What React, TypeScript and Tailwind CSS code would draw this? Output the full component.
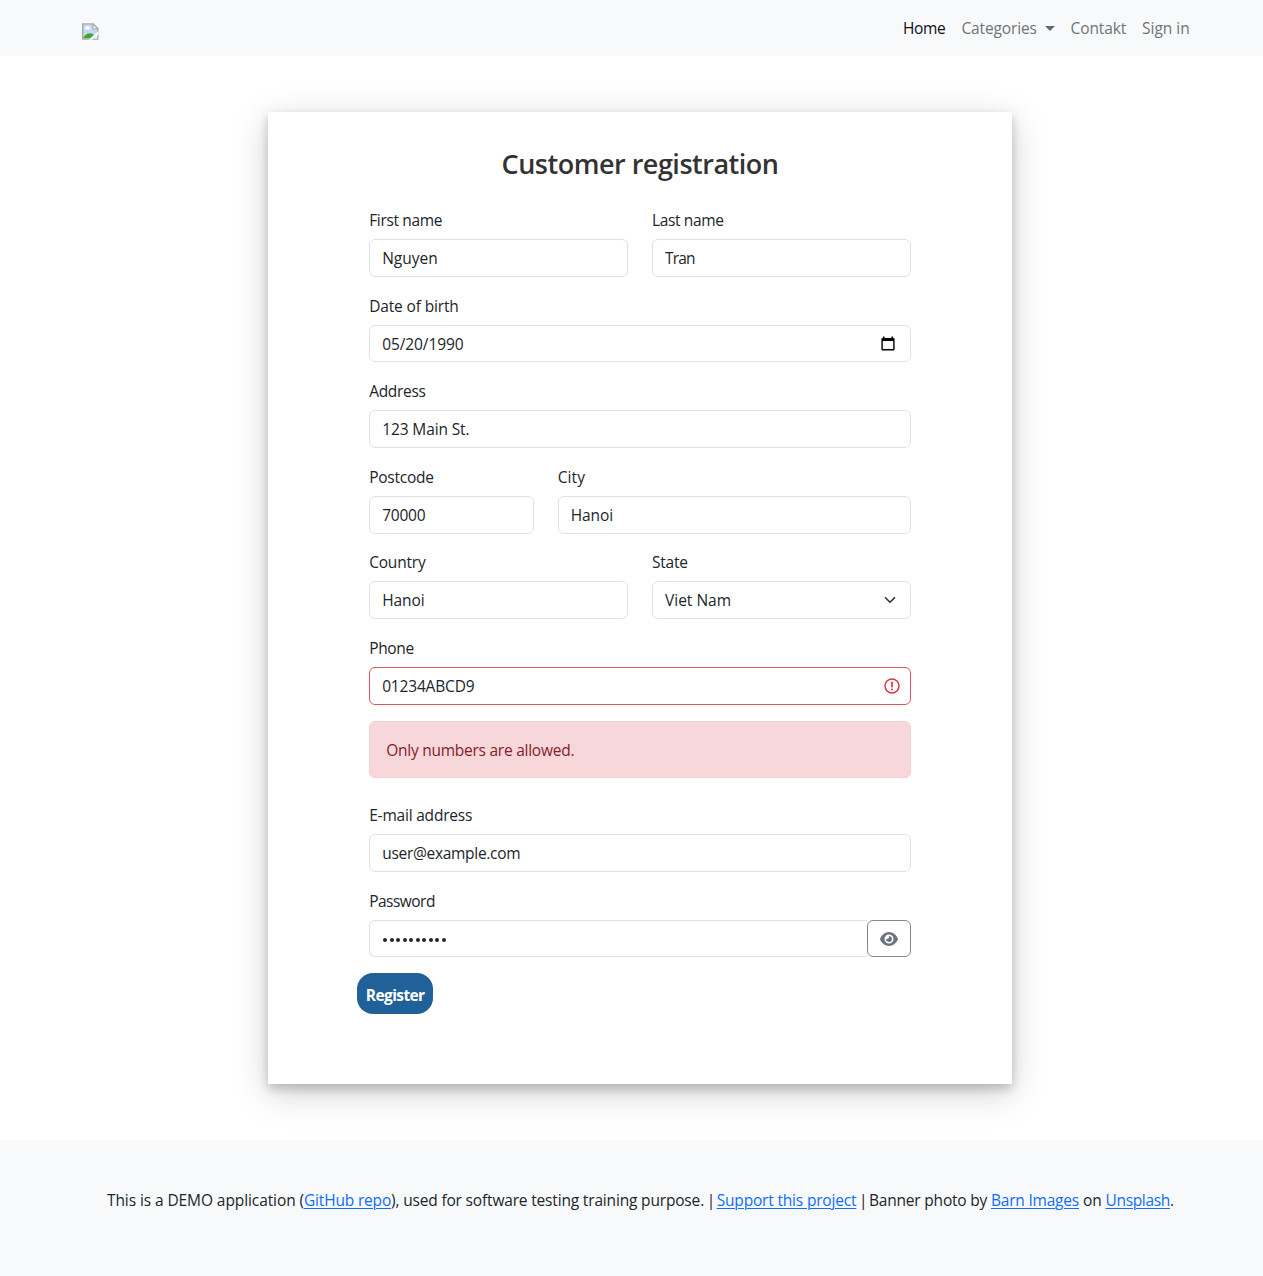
import type { ReactNode } from 'react';

const inputClass =
  'block h-[37.6px] w-full rounded-[6px] border border-[#dee2e6] bg-white pl-3 text-[15.5px] leading-6 text-[#212529] outline-none';

type FieldProps = {
  label: string;
  labelClass: string;
  className?: string;
  children: ReactNode;
};

function Field({ label, labelClass, className = '', children }: FieldProps) {
  return (
    <div className={`mb-4 flex flex-col ${className}`}>
      <label className={`mt-[0.8px] mb-[7.2px] block h-6 leading-6 ${labelClass}`}>{label}</label>
      {children}
    </div>
  );
}

function BrokenImage() {
  return (
    <svg width="16.500" height="17" viewBox="0 0 17 17" fill="none" aria-hidden="true">
      <path d="M0.7 0.7H11.5L16.3 5.5V9L8.5 16.3H0.7Z" fill="#c3d7f9" />
      <path d="M3 6.500a1.500 1.500 0 0 1 1-2.300 2 2 0 0 1 3.800 0.200 1.300 1.300 0 0 1 0.600 2.100Z" fill="#fff" />
      <path d="M1.500 15.500V14.500C3.500 11 7 9.200 10.500 10.800L12.500 12.200L9 15.500Z" fill="#43a62a" />
      <path d="M0.7 16.3V0.7H11.5L16.3 5.5V16.3Z" stroke="#a9a9a9" strokeWidth="1.4" />
      <path d="M11.2 0.8V5.7H16.2Z" fill="#fff" stroke="#a9a9a9" strokeWidth="1.2" />
      <path d="M17 8V11.500L10.800 17H6.800Z" fill="#f8f9fb" />
    </svg>
  );
}

function CalendarIcon() {
  return (
    <svg width="14" height="15" viewBox="0 0 14 15" aria-hidden="true">
      <path
        d="M2 0.5H3.5V2H10.5V0.5H12V2H12.7A0.9 0.9 0 0 1 13.6 2.9V13.6A0.9 0.9 0 0 1 12.7 14.4H1.3A0.9 0.9 0 0 1 0.4 13.6V2.9A0.9 0.9 0 0 1 1.3 2H2ZM1.8 5V13H12.2V5Z"
        fill="#000"
        fillRule="evenodd"
      />
    </svg>
  );
}

function EyeIcon() {
  return (
    <svg width="18" height="16" viewBox="0 0 576 512" fill="#6c757d" aria-hidden="true">
      <path d="M288 32c-80.800 0-145.500 36.800-192.600 80.600C48.600 156 17.300 208 2.500 243.700c-3.300 7.900-3.300 16.700 0 24.600C17.300 304 48.600 356 95.400 399.400C142.500 443.200 207.200 480 288 480s145.500-36.800 192.600-80.600c46.800-43.500 78.100-95.400 93-131.100c3.300-7.900 3.300-16.700 0-24.600c-14.900-35.700-46.200-87.700-93-131.100C433.500 68.800 368.800 32 288 32zM144 256a144 144 0 1 1 288 0 144 144 0 1 1 -288 0zm144-64c0 35.300-28.700 64-64 64c-7.100 0-13.900-1.200-20.300-3.300c-5.500-1.800-11.900 1.600-11.700 7.400c.3 6.900 1.300 13.800 3.200 20.700c13.700 51.200 66.400 81.600 117.600 67.900s81.600-66.400 67.900-117.600c-11.100-41.500-47.800-69.400-88.600-71.100c-5.800-.2-9.200 6.100-7.400 11.700c2.100 6.400 3.300 13.200 3.300 20.300z" />
    </svg>
  );
}

export default function App() {
  const link = 'text-[#0d6efd] underline decoration-1 underline-offset-[2px]';
  return (
    <div className="h-[1276px] w-full overflow-hidden bg-white font-['Open_Sans',sans-serif] text-[15.5px] leading-6 text-[#212529]">
      <div className="w-[1280px]">
        <nav className="flex h-14 items-center justify-between bg-[#f8f9fb] pr-[82px] pl-[82px]">
          <a href="#" className="mt-[7px]">
            <BrokenImage />
          </a>
          <div className="flex h-6 items-center whitespace-nowrap text-[#727375]">
            <a className="w-[58.5px] tracking-[-0.4px] text-[#0d0e0f]">Home</a>
            <a className="flex w-[109px] items-center tracking-[-0.15px]">
              <span className="w-[83px]">Categories</span>
              <svg width="10" height="5" viewBox="0 0 10 5" aria-hidden="true">
                <path d="M0 0H10L5 5Z" fill="#66686a" />
              </svg>
            </a>
            <a className="w-[71.5px] tracking-[-0.1px]">Contakt</a>
            <a className="w-[56px]">Sign in</a>
          </div>
        </nav>

        <main className="pt-14 pb-14">
          <section className="mx-auto h-[972px] w-[744px] bg-white px-[101.2px] pt-9 shadow-[0_5px_10px_0_rgba(0,0,0,0.2),0_9px_34px_0_rgba(0,0,0,0.18)]">
            <h3 className="mb-[25.2px] h-[34px] text-center text-[27px] leading-[32px] font-semibold tracking-[-0.49px] text-[#333]">
              Customer registration
            </h3>
            <form onSubmit={(e) => e.preventDefault()}>
              <div className="flex gap-6">
                <Field label="First name" labelClass="tracking-[-0.34px]" className="flex-1">
                  <input className={inputClass} defaultValue="Nguyen" />
                </Field>
                <Field label="Last name" labelClass="tracking-[-0.36px]" className="flex-1">
                  <input className={`${inputClass} tracking-[-0.8px]`} defaultValue="Tran" />
                </Field>
              </div>
              <Field label="Date of birth" labelClass="tracking-[-0.15px]">
                <div className={`${inputClass} flex items-center justify-between pr-[15px] tracking-[-0.1px]`}>
                  <span className="mt-px">05/20/1990</span>
                  <CalendarIcon />
                </div>
              </Field>
              <Field label="Address" labelClass="tracking-[-0.3px]">
                <input className={`${inputClass} tracking-[-0.12px]`} defaultValue="123 Main St." />
              </Field>
              <div className="flex gap-6">
                <Field label="Postcode" labelClass="tracking-[-0.25px]" className="w-[164.5px]">
                  <input className={`${inputClass} tracking-[-0.25px]`} defaultValue="70000" />
                </Field>
                <Field label="City" labelClass="tracking-[0.1px]" className="flex-1">
                  <input className={`${inputClass} tracking-[-0.1px]`} defaultValue="Hanoi" />
                </Field>
              </div>
              <div className="flex gap-6">
                <Field label="Country" labelClass="tracking-[-0.2px]" className="flex-1">
                  <input className={`${inputClass} tracking-[-0.1px]`} defaultValue="Hanoi" />
                </Field>
                <Field label="State" labelClass="tracking-[-0.25px]" className="flex-1">
                  <div className={`${inputClass} flex items-center justify-between pr-3`}>
                    <span>Viet Nam</span>
                    <svg width="16" height="12" viewBox="0 0 16 16" fill="none" aria-hidden="true">
                      <path
                        d="m2 5 6 6 6-6"
                        stroke="#343a40"
                        strokeWidth="2.3"
                        strokeLinecap="round"
                        strokeLinejoin="round"
                      />
                    </svg>
                  </div>
                </Field>
              </div>
              <Field label="Phone" labelClass="tracking-[-0.35px]">
                <div className="flex h-[37.6px] items-center justify-between rounded-[6px] border border-[#dc3545]/85 pr-[10px] pl-3 tracking-[-0.18px]">
                  <span>01234ABCD9</span>
                  <svg width="16" height="16" viewBox="0 0 16 16" fill="none" aria-hidden="true">
                    <circle cx="8" cy="8" r="7" stroke="#dc3545" strokeWidth="1.5" />
                    <path d="M8 4.3V8.7" stroke="#dc3545" strokeWidth="1.7" strokeLinecap="round" />
                    <circle cx="8" cy="11.4" r="1" fill="#dc3545" />
                  </svg>
                </div>
              </Field>
              <div className="mb-6 flex h-[57.6px] items-center rounded-[6px] border border-[#f5cfd3] bg-[#f8d7da] px-4 pt-px tracking-[-0.25px] text-[#842029]">
                Only numbers are allowed.
              </div>
              <Field label="E-mail address" labelClass="tracking-[-0.2px]">
                <input className={`${inputClass} tracking-[-0.3px]`} defaultValue="user@example.com" />
              </Field>
              <Field label="Password" labelClass="tracking-[-0.52px]">
                <div className="flex">
                  <div className="flex h-[37.6px] flex-1 items-center gap-[2.5px] rounded-l-[6px] border border-r-0 border-[#dee2e6] pl-[13px]">
                    {Array.from({ length: 10 }, (_, i) => (
                      <span key={i} className="mt-[3px] size-1 rounded-full bg-[#212529]" />
                    ))}
                  </div>
                  <button
                    type="button"
                    aria-label="Show password"
                    className="flex h-[37.6px] w-11 items-center justify-center rounded-[6px] border border-[#6c757d]/85"
                  >
                    <EyeIcon />
                  </button>
                </div>
              </Field>
              <button
                type="submit"
                className="-ml-3 block h-[41px] w-[76px] rounded-[16px] bg-[#1f6198] pt-[2px] text-center font-bold tracking-[-0.6px] text-white"
              >
                Register
              </button>
            </form>
          </section>
        </main>

        <footer className="h-[136px] bg-[#f8f9fb] pt-12 pl-[107px] whitespace-pre">
          <p>
            <span className="tracking-[-0.09px]">This is a DEMO application (</span>
            <a className={`${link} tracking-[-0.18px]`}>GitHub repo</a>
            <span className="tracking-[-0.17px]">), used for software testing training purpose.</span>
            <span className="tracking-[-1.3px]">{' | '}</span>
            <a className={`${link} tracking-[-0.18px]`}>Support this project</a>
            <span className="tracking-[-1.3px]">{' | '}</span>
            <span className="tracking-[-0.2px]">{'Banner photo by '}</span>
            <a className={`${link} tracking-[-0.21px]`}>Barn Images</a>
            <span className="tracking-[-0.1px]">{' on '}</span>
            <a className={`${link} tracking-[-0.32px]`}>Unsplash</a>
            <span>.</span>
          </p>
        </footer>
      </div>
    </div>
  );
}
